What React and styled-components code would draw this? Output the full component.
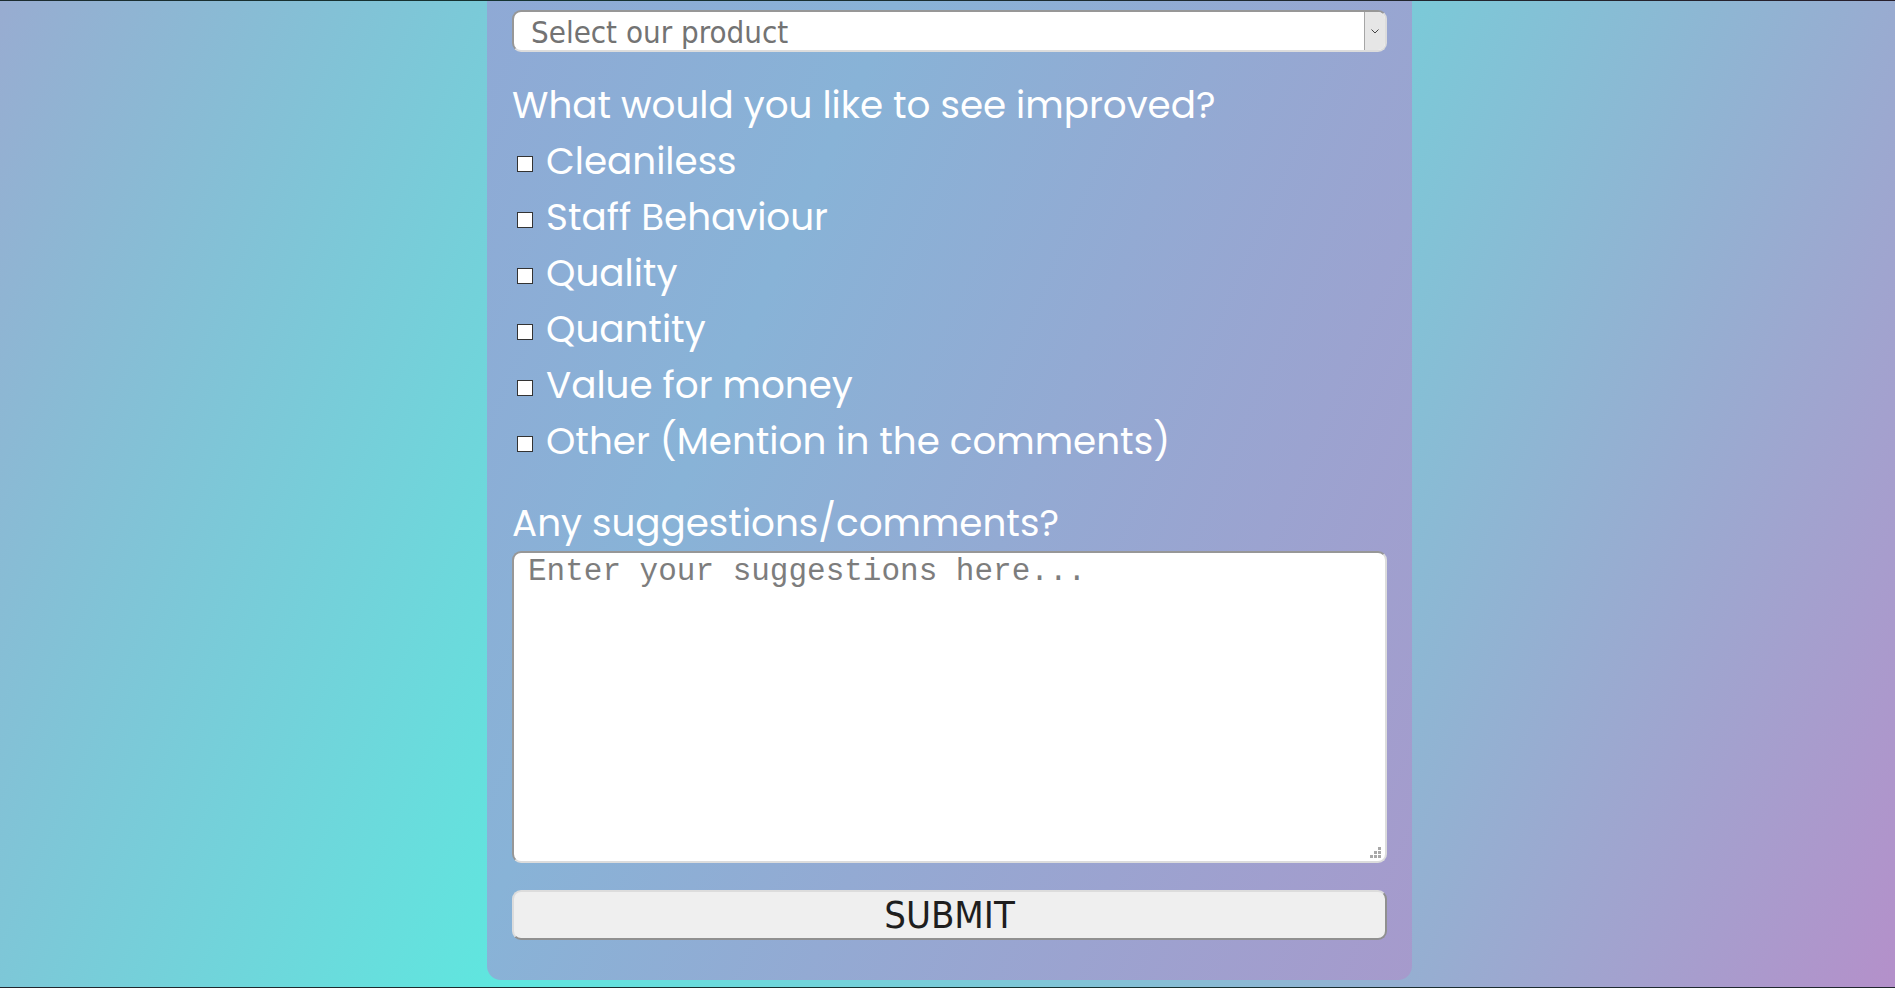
import React from "react";
import styled, { createGlobalStyle } from "styled-components";

const GlobalStyle = createGlobalStyle`
  html, body {
    margin: 0;
    padding: 0;
  }
  body {
    font-family: "Poppins", Inter, sans-serif;
  }
  * {
    box-sizing: border-box;
  }
`;

const Page = styled.div`
  height: 100vh;
  display: flex;
  justify-content: center;
  align-items: flex-start;
  padding-left: 4px;
  overflow: hidden;
  border-top: 1px solid rgba(0, 0, 0, 0.78);
  border-bottom: 1px solid rgba(0, 0, 0, 0.78);
  background: linear-gradient(114deg, #98acd1 0%, #5ee7df 40.6%, #b490ca 100%);
`;

const Card = styled.form`
  width: 925px;
  padding: 9px 25px 40px;
  display: flex;
  flex-direction: column;
  border-radius: 0 0 14px 14px;
  background: linear-gradient(114deg, #8fa9d5 0%, #88b3d7 30%, #a69acc 100%);
`;

const SelectBox = styled.div`
  height: 42px;
  display: flex;
  background: #fff;
  border-radius: 9px;
  border: 2px solid;
  border-color: #979797 #dcdcdc #dcdcdc #979797;
  overflow: hidden;
`;

const SelectText = styled.span`
  flex: 1;
  padding: 2px 0 0 17px;
  font-family: "DejaVu Sans Condensed", "DejaVu Sans", sans-serif;
  font-stretch: condensed;
  font-size: 31px;
  line-height: 36px;
  color: #737373;
`;

const ArrowBox = styled.span`
  width: 21px;
  display: flex;
  align-items: center;
  justify-content: center;
  background: #e6e6e6;
  border-left: 1px solid #a6a6a6;
`;

const Question = styled.h2`
  margin: ${(p) => p.$gap}px 0 0;
  font-size: 37.3px;
  font-weight: 400;
  line-height: 56px;
  color: #fff;
`;

const OptionList = styled.div`
  display: flex;
  flex-direction: column;
`;

const Option = styled.label`
  height: 56px;
  display: flex;
  align-items: center;
  font-size: 37.3px;
  color: #fff;
`;

const Box = styled.input.attrs({ type: "checkbox" })`
  appearance: none;
  width: 16px;
  height: 16px;
  margin: 6px 13px 0 5px;
  border: 1.5px solid #333;
  background: #fff;
`;

const TextareaWrap = styled.div`
  position: relative;
`;

const Comments = styled.textarea`
  display: block;
  width: 100%;
  height: 312px;
  padding: 4px 14px 0;
  resize: none;
  border-radius: 9px;
  border: 2px solid;
  border-color: #979797 #dcdcdc #dcdcdc #979797;
  background: #fff;
  font-family: "Liberation Mono", monospace;
  font-size: 31px;
  line-height: 30px;
  outline: none;
  &::placeholder {
    color: #7d7d7d;
  }
`;

const Grip = styled.svg`
  position: absolute;
  right: 5px;
  bottom: 4px;
`;

const SubmitButton = styled.button`
  margin-top: 27px;
  height: 50px;
  padding: 0;
  border-radius: 9px;
  border: 2px solid;
  border-color: #dcdcdc #909090 #909090 #dcdcdc;
  background: #efefef;
  color: #1e1e1e;
  font-family: "DejaVu Sans Condensed", "DejaVu Sans", sans-serif;
  font-stretch: condensed;
  font-size: 38px;
  line-height: 46px;
`;

const improvements = [
  "Cleaniless",
  "Staff Behaviour",
  "Quality",
  "Quantity",
  "Value for money",
  "Other (Mention in the comments)",
];

export default function App() {
  return (
    <>
      <GlobalStyle />
      <Page>
        <Card onSubmit={(e) => e.preventDefault()}>
          <SelectBox>
            <SelectText>Select our product</SelectText>
            <ArrowBox>
              <svg width="8" height="5" viewBox="0 0 8 5">
                <polyline points="0.5,0.5 4,4 7.5,0.5" fill="none" stroke="#444" strokeWidth="1" />
              </svg>
            </ArrowBox>
          </SelectBox>

          <Question $gap={25}>What would you like to see improved?</Question>
          <OptionList>
            {improvements.map((item) => (
              <Option key={item}>
                <Box />
                {item}
              </Option>
            ))}
          </OptionList>

          <Question $gap={26}>Any suggestions/comments?</Question>
          <TextareaWrap>
            <Comments placeholder="Enter your suggestions here..." />
            <Grip width="12" height="12" viewBox="0 0 12 12">
              <rect x="8" y="0" width="3" height="3" fill="#a8a8a8" />
              <rect x="4" y="4" width="3" height="3" fill="#a8a8a8" />
              <rect x="8" y="4" width="3" height="3" fill="#a8a8a8" />
              <rect x="0" y="8" width="3" height="3" fill="#a8a8a8" />
              <rect x="4" y="8" width="3" height="3" fill="#a8a8a8" />
              <rect x="8" y="8" width="3" height="3" fill="#a8a8a8" />
            </Grip>
          </TextareaWrap>

          <SubmitButton type="submit">SUBMIT</SubmitButton>
        </Card>
      </Page>
    </>
  );
}
